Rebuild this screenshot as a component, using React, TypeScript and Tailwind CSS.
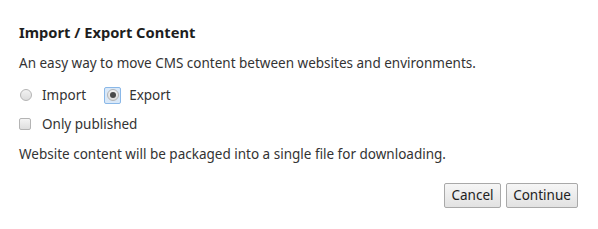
import { useState } from "react";

type Mode = "import" | "export";

function Radio({ checked, focused }: { checked: boolean; focused?: boolean }) {
  return (
    <span
      className={`flex h-[17px] w-[17px] items-center justify-center rounded-[2px] border ${
        focused ? "border-[#8ab8e8] bg-[#d9e8f8]" : "border-transparent"
      }`}
    >
      <span className="flex h-[12px] w-[12px] items-center justify-center rounded-full border border-[#b4b4b4] bg-gradient-to-b from-[#f2f2f2] to-[#dcdcdc]">
        {checked && <span className="h-[6px] w-[6px] rounded-full bg-[#4a4a4a]" />}
      </span>
    </span>
  );
}

function Checkbox({ checked }: { checked: boolean }) {
  return (
    <span className="flex h-[12px] w-[12px] items-center justify-center rounded-[2px] border border-[#b4b4b4] bg-gradient-to-b from-[#f4f4f4] to-[#dedede]">
      {checked && <span className="h-[6px] w-[6px] bg-[#4a4a4a]" />}
    </span>
  );
}

export default function App() {
  const [mode, setMode] = useState<Mode>("export");
  const [onlyPublished, setOnlyPublished] = useState(false);

  return (
    <div
      className="h-[229px] w-[598px] bg-white px-[19px] pt-[22px] text-[13.5px] text-[#333]"
      style={{ fontFamily: '"Noto Sans", "Open Sans", sans-serif' }}
    >
      <h2 className="text-[14.7px] font-bold leading-[20px] text-[#1e1e1e]">Import / Export Content</h2>

      <p className="mt-[11px] leading-[20px]">
        An easy way to move CMS content between websites and environments.
      </p>

      {/* export / import choice */}
      <div className="mt-[12px] flex h-[20px] items-center">
        <button className="flex items-center" onClick={() => setMode("import")}>
          <span className="-ml-[2px] mr-[8px]">
            <Radio checked={mode === "import"} focused={mode === "import"} />
          </span>
          <span className="leading-[20px]">Import</span>
        </button>
        <button className="ml-[18px] flex items-center" onClick={() => setMode("export")}>
          <span className="mr-[8px]">
            <Radio checked={mode === "export"} focused={mode === "export"} />
          </span>
          <span className="leading-[20px]">Export</span>
        </button>
      </div>

      <button
        className="mt-[9px] flex h-[20px] items-center"
        onClick={() => setOnlyPublished(!onlyPublished)}
      >
        <span className="mr-[11px]">
          <Checkbox checked={onlyPublished} />
        </span>
        <span className="leading-[20px]">Only published</span>
      </button>

      <p className="mt-[10px] leading-[20px]">
        Website content will be packaged into a single file for downloading.
      </p>

      <div className="mt-[19px] flex justify-end gap-[5px] pr-px">
        <button className="h-[25px] w-[57px] rounded-[2px] border border-[#a9a9a9] bg-gradient-to-b from-[#f6f6f6] to-[#e2e2e2] text-[13.5px] text-[#222]">
          Cancel
        </button>
        <button className="h-[25px] w-[72px] rounded-[2px] border border-[#a9a9a9] bg-gradient-to-b from-[#f6f6f6] to-[#e2e2e2] text-[13.5px] text-[#222]">
          Continue
        </button>
      </div>
    </div>
  );
}
